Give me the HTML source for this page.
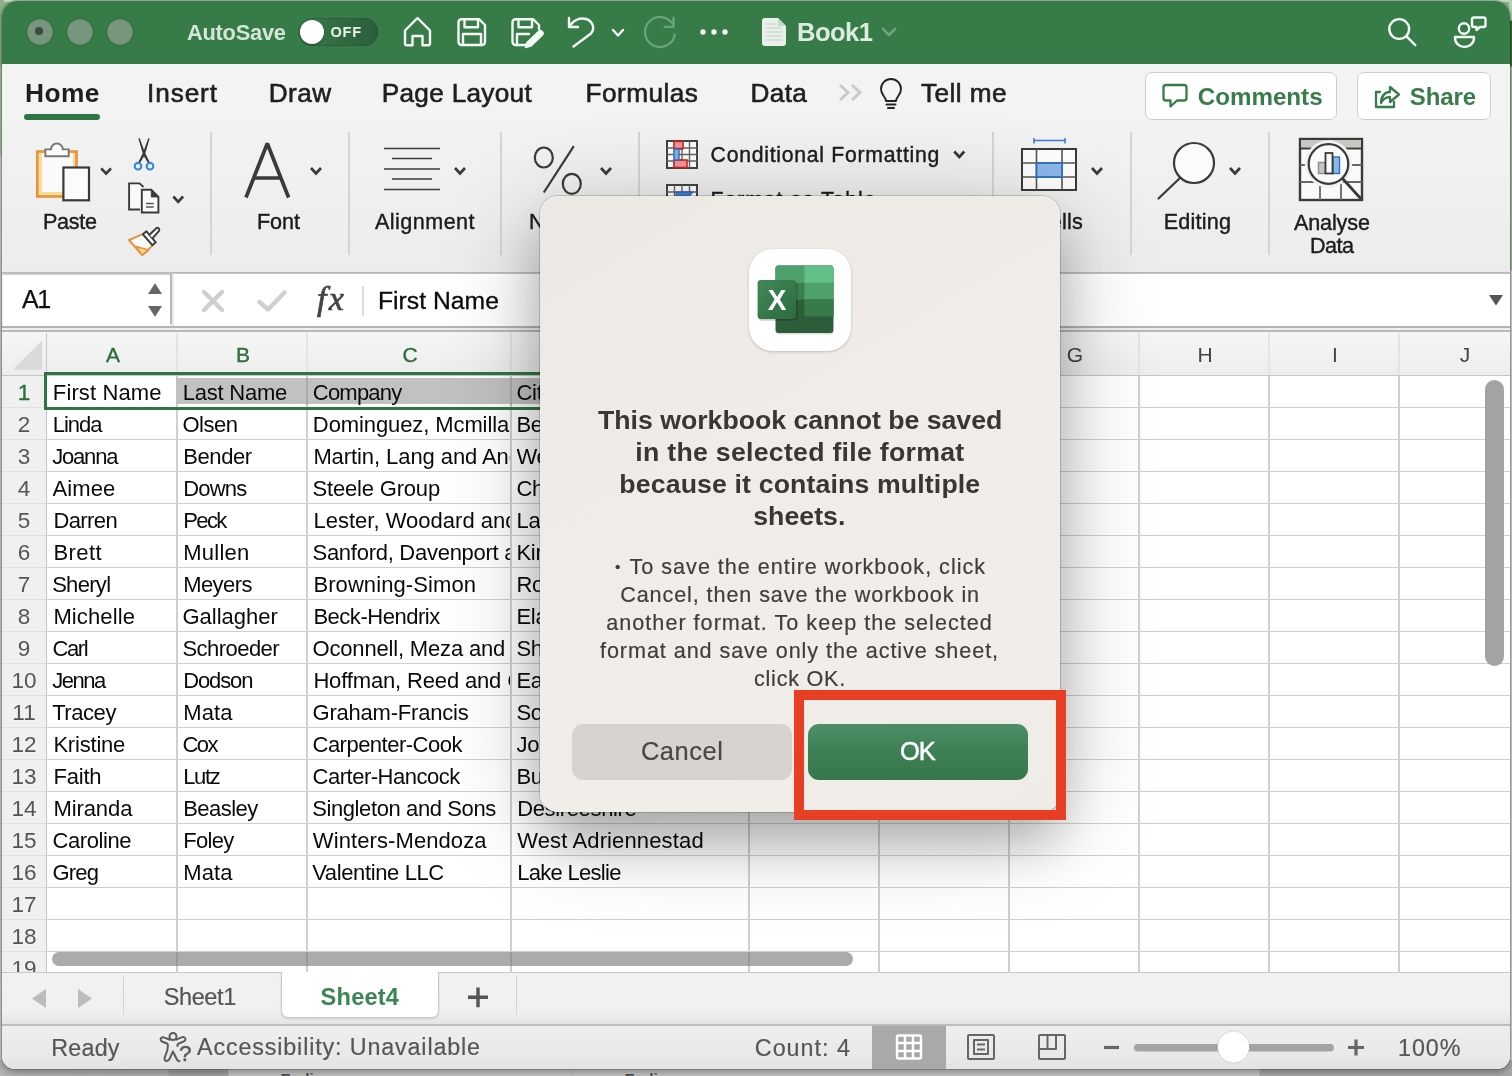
<!DOCTYPE html>
<html lang="en">
<head>
<meta charset="utf-8">
<title>Book1 - Excel</title>
<style>
*{box-sizing:border-box;margin:0;padding:0}
html,body{width:1512px;height:1076px;overflow:hidden}
body{position:relative;font-family:"Liberation Sans",sans-serif;background:#8fb58a;color:#222}
.abs,.t{position:absolute}
#win,#dlg,#deskwrap{will-change:transform}
.t{white-space:nowrap;line-height:1}
#desk-top{left:0;top:0;width:1512px;height:2px;background:#c4dbc5}
#desk-right{left:1509px;top:0;width:3px;height:1076px;background:linear-gradient(#b9d2b8 0,#b9d2b8 20px,#3d6a33 21px,#3d6a33 66px,#9cc098 67px,#9cc098 270px,#d6d6d6 271px)}
#desk-left{left:0;top:0;width:4px;height:1076px;background:linear-gradient(#8fb58a 0,#8fb58a 66px,#a3c39f 67px,#a3c39f 155px,#cdcdcd 156px)}
#desk-bottom{left:0;top:1060px;width:1512px;height:16px;background:linear-gradient(90deg,#b4b4b4 0,#b0b0b0 168px,#a2a2a2 169px,#a2a2a2 228px,#c6c6c6 229px,#c6c6c6 571px,#bdbdbd 572px,#c7c7c7 574px,#c7c7c7 1259px,#a9a9a9 1260px)}
#win{left:2px;top:1px;width:1508px;height:1068px;border-radius:15px 15px 13px 13px;overflow:hidden;background:#f1f1f1;box-shadow:0 0 0 1px rgba(0,0,0,.18),0 3px 8px rgba(0,0,0,.35)}
#pg{left:-2px;top:-1px;width:1512px;height:1076px}
#titlebar{left:0;top:0;width:1512px;height:64px;background:#377b49}
.tl{width:28px;height:28px;border-radius:50%;background:#76957c;border:1.800px solid #2b6539;top:18px}
#tabrow{left:0;top:64px;width:1512px;height:62px;background:#f3f3f3}
#ribbon{left:0;top:126px;width:1512px;height:147px;background:linear-gradient(#f2f2f2,#ececec)}
.tab{font-size:26px;color:#222;top:79px;letter-spacing:.35px}
.rl{font-size:21.5px;color:#1d1d1d;letter-spacing:.2px}
.sep{width:2px;background:#d4d4d4;top:132px;height:123px}
.btn{top:72px;height:48px;background:#fff;border:1.5px solid #cecece;border-radius:7px}
.btn .t{font-weight:bold;color:#387c4a;font-size:24px;top:11px}

.cal{font-family:"Liberation Sans",sans-serif}
.hd{top:344px;width:42px;text-align:center;font-size:21px}
.rn{left:4px;width:40px;text-align:center;font-size:22.500px}
.ce{font-size:22px;color:#0a0a0a;overflow:hidden;height:26px}
.gl{background:#cfcfcf}
.st{top:1036px;font-size:23.500px;color:#595959;letter-spacing:.55px}
#dlg{left:540px;top:196px;width:520px;height:615.500px;border-radius:18px;background:linear-gradient(150deg,#ece9e5 0,#f0ede9 45%,#f1eeea 70%,#efece8 100%);box-shadow:0 0 0 1px rgba(0,0,0,.17),0 20px 100px rgba(0,0,0,.23),0 30px 50px rgba(0,0,0,.21)}
.dt{left:0;width:520px;text-align:center;font-weight:bold;font-size:26.800px;line-height:32px;color:#3a3733}
.db{left:0;width:520px;text-align:center;font-size:21.300px;line-height:28px;color:#484542;letter-spacing:.65px}
.bt{top:528px;width:220px;height:56px;border-radius:11px;text-align:center;font-size:25.500px;line-height:55px}
</style>
</head>
<body>
<div class="abs" id="desk-top"></div>
<div class="abs" id="desk-right"></div>
<div class="abs" id="desk-left"></div>
<div class="abs" id="desk-bottom"></div>
<div class="t" style="left:280.500px;top:1070.500px;font-size:15.400px;font-weight:bold;color:#555">Earlier</div>
<div class="t" style="left:624.500px;top:1070.500px;font-size:15.400px;font-weight:bold;color:#555">Earlier</div>
<div class="abs" id="win"><div class="abs" id="pg">
<!-- title bar -->
<div class="abs" id="titlebar"></div>
<div class="abs tl" style="left:26px"><div class="abs" style="left:8.400px;top:8.400px;width:7.600px;height:7.600px;border-radius:50%;background:#394a40"></div></div>
<div class="abs tl" style="left:66px"></div>
<div class="abs tl" style="left:106px"></div>
<div class="abs" style="left:298px;top:18px;width:80px;height:28px;border-radius:14px;background:linear-gradient(90deg,#3a7a4b,#2a5e39);box-shadow:inset 0 0 0 1px rgba(0,0,0,.12)"></div>
<div class="abs" style="left:300px;top:20px;width:24px;height:24px;border-radius:50%;background:#fff;box-shadow:0 1px 2px rgba(0,0,0,.4)"></div>

<!-- tab row -->
<div class="abs" id="tabrow"></div>
<div class="abs" style="left:24px;top:114px;width:76px;height:5.5px;border-radius:3px;background:#2f7544"></div>
<div class="abs btn" style="left:1145px;width:192px"></div>
<div class="abs btn" style="left:1357px;width:134px"></div>

<!-- ribbon -->
<div class="abs" id="ribbon"></div>
<div class="abs sep" style="left:210px"></div>
<div class="abs sep" style="left:348px"></div>
<div class="abs sep" style="left:500px"></div>
<div class="abs sep" style="left:638px"></div>
<div class="abs sep" style="left:992px"></div>
<div class="abs sep" style="left:1130px"></div>
<div class="abs sep" style="left:1268px"></div>
<div class="t" style="left:187.00px;top:21.55px;font-size:21.8px;color:#d3e6d7;letter-spacing:-0.23px;font-weight:bold;">AutoSave</div>
<div class="t" style="left:330.50px;top:25.23px;font-size:14.5px;color:#eaf3ec;letter-spacing:0.75px;font-weight:bold;">OFF</div>
<div class="t" style="left:797.00px;top:20.33px;font-size:25.6px;color:#dcecdf;letter-spacing:-0.55px;font-weight:bold;">Book1</div>
<div class="t" style="left:25.00px;top:79.74px;font-size:26.3px;color:#1f1f1f;letter-spacing:0.46px;font-weight:bold;">Home</div>
<div class="t" style="left:147.00px;top:79.82px;font-size:26.2px;color:#1f1f1f;letter-spacing:0.90px;-webkit-text-stroke:.6px #1f1f1f;">Insert</div>
<div class="t" style="left:268.75px;top:79.82px;font-size:26.2px;color:#1f1f1f;letter-spacing:0.44px;-webkit-text-stroke:.6px #1f1f1f;">Draw</div>
<div class="t" style="left:381.75px;top:79.82px;font-size:26.2px;color:#1f1f1f;letter-spacing:0.29px;-webkit-text-stroke:.6px #1f1f1f;">Page Layout</div>
<div class="t" style="left:585.50px;top:79.82px;font-size:26.2px;color:#1f1f1f;letter-spacing:0.46px;-webkit-text-stroke:.6px #1f1f1f;">Formulas</div>
<div class="t" style="left:750.50px;top:79.82px;font-size:26.2px;color:#1f1f1f;letter-spacing:0.36px;-webkit-text-stroke:.6px #1f1f1f;">Data</div>
<div class="t" style="left:921.00px;top:79.82px;font-size:26.2px;color:#1f1f1f;letter-spacing:0.45px;-webkit-text-stroke:.6px #1f1f1f;">Tell me</div>
<div class="t" style="left:1197.75px;top:84.51px;font-size:24.2px;color:#387c4a;letter-spacing:-0.02px;font-weight:bold;">Comments</div>
<div class="t" style="left:1409.75px;top:84.68px;font-size:24px;color:#387c4a;letter-spacing:-0.12px;font-weight:bold;">Share</div>
<div class="t" style="left:43.00px;top:211.22px;font-size:21.6px;color:#1c1c1c;letter-spacing:-0.30px;-webkit-text-stroke:.4px #1c1c1c;">Paste</div>
<div class="t" style="left:257.00px;top:211.22px;font-size:21.6px;color:#1c1c1c;letter-spacing:-0.07px;-webkit-text-stroke:.4px #1c1c1c;">Font</div>
<div class="t" style="left:375.00px;top:211.22px;font-size:21.6px;color:#1c1c1c;letter-spacing:0.44px;-webkit-text-stroke:.4px #1c1c1c;">Alignment</div>
<div class="t" style="left:529.00px;top:211.22px;font-size:21.6px;color:#1c1c1c;-webkit-text-stroke:.4px #1c1c1c;letter-spacing:.5px;">Number</div>
<div class="t" style="left:710.60px;top:144.35px;font-size:21.2px;color:#1c1c1c;letter-spacing:0.74px;-webkit-text-stroke:.4px #1c1c1c;">Conditional Formatting</div>
<div class="t" style="left:710.60px;top:188.85px;font-size:21.2px;color:#1c1c1c;-webkit-text-stroke:.4px #1c1c1c;letter-spacing:.95px;">Format as Table</div>
<div class="t" style="left:1034.00px;top:211.22px;font-size:21.6px;color:#1c1c1c;letter-spacing:0.23px;-webkit-text-stroke:.4px #1c1c1c;">Cells</div>
<div class="t" style="left:1163.75px;top:211.22px;font-size:21.6px;color:#1c1c1c;letter-spacing:0.19px;-webkit-text-stroke:.4px #1c1c1c;">Editing</div>
<div class="t" style="left:1294.00px;top:211.72px;font-size:21.6px;color:#1c1c1c;letter-spacing:-0.15px;-webkit-text-stroke:.4px #1c1c1c;">Analyse</div>
<div class="t" style="left:1310.00px;top:234.72px;font-size:21.6px;color:#1c1c1c;letter-spacing:-0.56px;-webkit-text-stroke:.4px #1c1c1c;">Data</div>
<svg class="abs" style="left:0;top:0" width="1512" height="274" viewBox="0 0 1512 274" fill="none" stroke-linecap="round" stroke-linejoin="round">
<!-- titlebar icons -->
<g stroke="#f4f9f5" stroke-width="2.4">
<path d="M405 30.5 L417.5 18 L430 30.5 V43.5 a1.8 1.8 0 0 1 -1.8 1.8 H422.5 V36 H412.5 V45.3 H406.8 a1.8 1.8 0 0 1 -1.8 -1.8 Z"/>
<path d="M461.5 19.2 H479 L485 25 V42 a3 3 0 0 1 -3 3 H461.5 a3 3 0 0 1 -3 -3 V22.2 a3 3 0 0 1 3 -3 Z"/>
<path d="M464.5 19.5 V27.3 H478 V19.5"/>
<path d="M463 45 V34 H481 V45"/>
<path d="M529 45 H515.5 a3 3 0 0 1 -3 -3 V22.2 a3 3 0 0 1 3 -3 H533 L539 25 V29"/>
<path d="M518.5 19.5 V27.3 H532 V19.5"/>
<path d="M517 45 V34 H529"/>
<path d="M569 18 V27 H578"/>
<path d="M569.5 26.5 C573 20 580 17.5 586 19 C592.5 21 595.5 28 591 33.5 L573.5 46.5"/>
<path d="M613 30 L618 35.5 L623 30"/>
<path d="M1409.100 29 a9.900 9.900 0 1 1 -19.800 0 a9.900 9.900 0 1 1 19.800 0 Z M1406.300 36.200 L1415.300 45.200"/>
<circle cx="1464" cy="28.5" r="5.2"/>
<path d="M1455 37 H1474 V38 a9.5 9 0 0 1 -19 0 Z"/>
<path d="M1474 17.5 H1483.5 a2 2 0 0 1 2 2 V25 a2 2 0 0 1 -2 2 H1480 L1476.5 30 V27 H1474 a2 2 0 0 1 -2 -2 V19.5 a2 2 0 0 1 2 -2 Z"/>
</g>
<path d="M538.5 31.5 a2.6 2.6 0 0 1 3.7 3.7 L531 46 L525.5 47.5 L527 42.5 Z" fill="#f4f9f5" stroke="#f4f9f5" stroke-width="1.6"/>
<g stroke="#6ea47c" stroke-width="2.2">
<path d="M673.500 17.500 V26.800 H664.500"/>
<path d="M672.300 23.400 A15 15 0 1 0 674.800 34.600"/>
<path d="M883 29 L889 35 L895 29" stroke-width="2.6"/>
</g>
<g fill="#f4f9f5"><circle cx="703" cy="32" r="2.700"/><circle cx="714" cy="32" r="2.700"/><circle cx="725" cy="32" r="2.700"/></g>
<path d="M765 18 H778 L786 26 V43 a3 3 0 0 1 -3 3 H765 a3 3 0 0 1 -3 -3 V21 a3 3 0 0 1 3 -3 Z" fill="#e9f0ea"/>
<path d="M778 18 V26 H786 Z" fill="#c4d6c8"/>
<g stroke="#c2cfc5" stroke-width="1.2"><path d="M766 24h9M766 28h16M766 32h16M766 36h16M766 40h16"/></g>

<!-- tab row icons -->
<g stroke="#c9c9c9" stroke-width="3" stroke-linecap="butt" stroke-linejoin="miter"><path d="M840 85 L848 92.5 L840 100"/><path d="M852 85 L860 92.5 L852 100"/></g>
<g stroke="#222" stroke-width="1.9">
<path d="M886 101 C886 97 881 95 881 89 a10 10 0 0 1 20 0 C901 95 896 97 896 101 Z"/>
<path d="M886.5 104.5 H895.5 M888 108 H894"/>
</g>
<g stroke="#387c4a" stroke-width="2.3">
<path d="M1166 85 H1184 a2.5 2.5 0 0 1 2.5 2.5 V98 a2.5 2.5 0 0 1 -2.5 2.5 H1177 L1170.5 106.5 V100.5 H1166 a2.5 2.5 0 0 1 -2.5 -2.5 V87.500 a2.5 2.5 0 0 1 2.500 -2.500 Z"/>
<path d="M1380 92 H1376 V107 H1394 V102"/>
<path d="M1381 103 C1381 96 1385 92 1390 92 V87 L1399 94.500 L1390 102 V97 C1386 97 1383 99 1381 103 Z"/>
</g>

<!-- Paste -->
<rect x="37.300" y="151.500" width="39.200" height="45" fill="#f8dc9a" stroke="#e8923a" stroke-width="2.600" stroke-linejoin="miter"/>
<rect x="42" y="153" width="30.800" height="39" fill="#fafafa" stroke="none"/>
<path d="M45.300 156.300 V149.400 H51 a5.900 5.900 0 0 1 11.800 0 H68.700 V156.300 Z" fill="#fafafa" stroke="#777" stroke-width="1.900" stroke-linejoin="miter"/>
<rect x="63.400" y="167.500" width="25.600" height="32.800" fill="#fbfbfb" stroke="#3a3a3a" stroke-width="2.200" stroke-linejoin="miter"/>
<g stroke="#3a3a3a" stroke-width="2.700" stroke-linecap="butt" stroke-linejoin="miter">
<path d="M101.200 168.300 L106.100 173.600 L111 168.300"/>
<path d="M173.300 196.500 L178.200 201.800 L183.100 196.500"/>
<path d="M311 168 L316 173.500 L321 168"/>
<path d="M455 168 L460 173.500 L465 168"/>
<path d="M601 168 L606 173.500 L611 168"/>
<path d="M954.300 151.500 L959.300 157 L964.300 151.500"/>
<path d="M1092 168 L1097 173.500 L1102 168"/>
<path d="M1230 168 L1235 173.500 L1240 168"/>
</g>
<!-- scissors -->
<path d="M138.300 138.300 L139.700 138.300 L145.200 153 L149.600 162 L148 163 L143.200 155 Z" fill="#3a3a3a"/>
<path d="M149.700 138.300 L148.300 138.300 L142.800 153 L138.400 162 L140 163 L144.800 155 Z" fill="#3a3a3a"/>
<circle cx="138" cy="166.200" r="3.300" stroke="#3c86d6" stroke-width="2.100"/><circle cx="150" cy="166.200" r="3.300" stroke="#3c86d6" stroke-width="2.100"/>
<!-- copy -->
<path d="M140 209.500 H129.100 V183.400 H139.500 L143.500 187" stroke="#3a3a3a" stroke-width="1.900" stroke-linejoin="miter" stroke-linecap="butt" fill="#fafafa"/>
<path d="M141.800 189.800 H151.300 L158.400 196.900 V212.500 H141.800 Z" fill="#fafafa" stroke="#3a3a3a" stroke-width="1.900" stroke-linejoin="miter"/>
<path d="M151.300 189.800 V196.900 H158.400 Z" fill="#3a3a3a" stroke="#3a3a3a" stroke-width="1" stroke-linejoin="miter"/>
<path d="M146 203.400 H153.700 M146 207 H153.700" stroke="#555" stroke-width="1.500" stroke-linecap="butt"/>
<!-- format painter -->
<path d="M129 240 C134 238 139 236 142.800 234.200 L152.300 245.200 C150 248.500 146.500 252 142.200 255 Z" fill="#fafafa" stroke="#e8923a" stroke-width="2" stroke-linejoin="round"/>
<path d="M136 246.500 L148.500 250 L142.200 255 Z" fill="#f8dc9a" stroke="#e8923a" stroke-width="1.600" stroke-linejoin="round"/>
<path d="M142.800 234.200 L146.500 231.300 L155.800 242.300 L152.300 245.200 Z" fill="#fafafa" stroke="#3a3a3a" stroke-width="1.900" stroke-linejoin="round"/>
<path d="M149.500 234.800 L156.300 228.300 a1.900 1.900 0 0 1 2.700 2.600 L152.500 238.300" fill="#fafafa" stroke="#3a3a3a" stroke-width="1.900" stroke-linejoin="round"/>
<!-- Font A -->
<path d="M246 197.500 L267.300 143.500 L288.600 197.500 M253.500 178 H281" stroke="#3a3a3a" stroke-width="3.700" stroke-linecap="butt" stroke-linejoin="bevel"/>
<!-- Alignment -->
<g stroke="#3a3a3a" stroke-width="1.700" stroke-linecap="butt"><path d="M384 148.500 H440 M392 158.500 H432 M384 169 H440 M392 179 H432 M384 189.500 H440"/></g>
<!-- percent -->
<g stroke="#3a3a3a" stroke-width="2.200" stroke-linecap="butt"><ellipse cx="543.800" cy="157.500" rx="9" ry="10"/><ellipse cx="571.800" cy="183.800" rx="9" ry="10"/><path d="M573.800 146.200 L543.800 192.500"/></g>
<!-- conditional formatting -->
<g stroke-linecap="butt" stroke-linejoin="miter">
<rect x="667" y="141" width="30" height="27" fill="#fff" stroke="#444" stroke-width="2"/>
<path d="M674.500 141 V168 M682 141 V168 M689.500 141 V168 M667 148 H697 M667 154.500 H697 M667 161 H697" stroke="#666" stroke-width="1.400"/>
<rect x="674" y="141.500" width="9" height="7" fill="#f1959b" stroke="#c8281e" stroke-width="1.600"/>
<rect x="674" y="160" width="13" height="7.500" fill="#f1959b" stroke="#c8281e" stroke-width="1.600"/>
<rect x="674" y="149" width="5" height="11" fill="#7fb2ea" stroke="#2e6fc0" stroke-width="1.400"/>
<path d="M679.500 149 H683 M679.500 160 H683" stroke="#c8281e" stroke-width="1.600"/>
<rect x="667" y="185" width="30" height="27" fill="#fff" stroke="#444" stroke-width="2"/>
<path d="M674.500 185 V212 M682 185 V212 M689.500 185 V212 M667 192 H697" stroke="#666" stroke-width="1.400"/>
<path d="M676 192 H693 L689 197 H676 Z" fill="#3d7fd8" stroke="#2a5fb0" stroke-width="1"/>
</g>
<!-- cells -->
<g stroke-linecap="butt" stroke-linejoin="miter">
<rect x="1022" y="149" width="54" height="41" fill="#fdfdfd" stroke="#3a3a3a" stroke-width="2"/>
<path d="M1036.500 149 V190 M1062 149 V190 M1022 163 H1076 M1022 177 H1076" stroke="#555" stroke-width="1.600"/>
<rect x="1036.500" y="163" width="25.500" height="14" fill="#8ab8ea" stroke="#2e6fc0" stroke-width="1.800"/>
<path d="M1034 140.500 H1065 M1034 138 V143.500 M1065 138 V143.500" stroke="#3c80d0" stroke-width="1.600"/>
</g>
<!-- editing -->
<circle cx="1194" cy="163" r="20" fill="#fbfbfb" stroke="#3a3a3a" stroke-width="2.200"/>
<path d="M1180 178 L1158.500 198.500" stroke="#3a3a3a" stroke-width="2.200"/>
<!-- analyse data -->
<g stroke-linecap="butt" stroke-linejoin="miter">
<rect x="1300" y="139" width="62" height="61" fill="#fafafa" stroke="#3a3a3a" stroke-width="2.400"/>
<rect x="1301" y="140" width="60" height="7.500" fill="#c8c6c3" stroke="none"/>
<path d="M1300 148.500 H1362" stroke="#3a3a3a" stroke-width="2"/>
<path d="M1300 165 H1362 M1300 182 H1362 M1320 182 V200 M1341 182 V200" stroke="#666" stroke-width="1.800"/>
<circle cx="1328.500" cy="164" r="21.500" fill="#fafafa" stroke="#f1f1f1" stroke-width="4.500"/>
<circle cx="1328.500" cy="164" r="19.800" fill="#fafafa" stroke="#3a3a3a" stroke-width="2.300"/>
<rect x="1318.500" y="162.500" width="7" height="11" fill="#c8c6c3" stroke="#8a8a8a" stroke-width="1.400"/>
<rect x="1333" y="157" width="6.500" height="16.500" fill="#8ab8ea" stroke="#2e6fc0" stroke-width="1.400"/>
<rect x="1325.500" y="153" width="7" height="20.500" fill="#fafafa" stroke="#3a3a3a" stroke-width="1.800"/>
<path d="M1342.500 178.500 L1362 200" stroke="#3a3a3a" stroke-width="2.800"/>
</g>
</svg>
<!-- formula bar -->
<div class="abs" style="left:0;top:272px;width:1512px;height:60px;background:#ececec"></div>
<div class="abs" style="left:0;top:272px;width:1512px;height:2.300px;background:linear-gradient(#b4b4b4,#c9c9c9)"></div>
<div class="abs" style="left:3px;top:274.300px;width:167px;height:51.700px;background:#fff;border-top:1.700px solid #cdcdcd"></div>
<div class="abs" style="left:170px;top:274.300px;width:2.200px;height:49.500px;background:#b9b9b9"></div>
<div class="abs" style="left:172.200px;top:274.300px;width:1.800px;height:51.700px;background:#e9e9e9"></div>
<div class="abs" style="left:174px;top:274.300px;width:1338px;height:51.700px;background:#fff"></div>
<div class="abs" style="left:0;top:326px;width:1512px;height:2px;background:#b3b3b3"></div>
<div class="abs" style="left:0;top:328px;width:1512px;height:2.300px;background:#efefef"></div>
<div class="abs" style="left:0;top:330.300px;width:1512px;height:1.500px;background:#b9b9b9"></div>
<div class="t" style="left:22.00px;top:286.84px;font-size:25px;color:#111;letter-spacing:-1.38px;-webkit-text-stroke:.25px #111;">A1</div>
<div class="t" style="left:378.00px;top:289.09px;font-size:24.7px;color:#0a0a0a;letter-spacing:0.02px;-webkit-text-stroke:.3px #0a0a0a;">First Name</div>
<div class="t" style="left:317px;top:282px;font-family:'Liberation Serif',serif;font-style:italic;font-size:34px;color:#444;letter-spacing:2.200px;-webkit-text-stroke:.7px #444">fx</div>
<div class="abs" style="left:362px;top:286px;width:1.500px;height:30px;background:#dcdcdc"></div>
<svg class="abs" style="left:0;top:272px" width="1512" height="60" viewBox="0 272 1512 60" fill="none"><path d="M148 294 L155 283.300 L162 294 Z M148 306 L155 316.800 L162 306 Z" fill="#666"/><path d="M204 292 L222 310 M222 292 L204 310" stroke="#cfcfcf" stroke-width="4.400" stroke-linecap="round"/><path d="M259.500 302 L268 309.500 L284.500 292.500" stroke="#cfcfcf" stroke-width="4.400" stroke-linecap="round" stroke-linejoin="round"/><path d="M1489 295 H1503 L1496 305.500 Z" fill="#555"/></svg>
<!-- grid -->
<div class="abs" style="left:0;top:332px;width:1512px;height:43px;background:linear-gradient(#f6f6f6,#ededed)"></div>
<div class="abs" style="left:0;top:375px;width:47px;height:597px;background:#f0f0f0"></div>
<div class="abs" style="left:47px;top:376px;width:1465px;height:596px;background:#fff"></div>
<svg class="abs" style="left:10px;top:338px" width="34" height="34" viewBox="0 0 34 34"><path d="M32 2.500 V31.700 H2.500 Z" fill="#dadada"/></svg>
<div class="t cal hd" style="left:92px;color:#2d6c3d;-webkit-text-stroke:.35px #2d6c3d;">A</div>
<div class="t cal hd" style="left:222px;color:#2d6c3d;-webkit-text-stroke:.35px #2d6c3d;">B</div>
<div class="t cal hd" style="left:389px;color:#2d6c3d;-webkit-text-stroke:.35px #2d6c3d;">C</div>
<div class="t cal hd" style="left:610px;color:#2d6c3d;-webkit-text-stroke:.35px #2d6c3d;">D</div>
<div class="t cal hd" style="left:794px;color:#444;">E</div>
<div class="t cal hd" style="left:924px;color:#444;">F</div>
<div class="t cal hd" style="left:1054px;color:#444;">G</div>
<div class="t cal hd" style="left:1184px;color:#444;">H</div>
<div class="t cal hd" style="left:1314px;color:#444;">I</div>
<div class="t cal hd" style="left:1444px;color:#444;">J</div>
<div class="abs" style="left:176px;top:333px;width:1.5px;height:41px;background:#e4e4e4"></div>
<div class="abs" style="left:306px;top:333px;width:1.5px;height:41px;background:#e4e4e4"></div>
<div class="abs" style="left:510px;top:333px;width:1.5px;height:41px;background:#e4e4e4"></div>
<div class="abs" style="left:748px;top:333px;width:1.5px;height:41px;background:#e4e4e4"></div>
<div class="abs" style="left:878px;top:333px;width:1.5px;height:41px;background:#e4e4e4"></div>
<div class="abs" style="left:1008px;top:333px;width:1.5px;height:41px;background:#e4e4e4"></div>
<div class="abs" style="left:1138px;top:333px;width:1.5px;height:41px;background:#e4e4e4"></div>
<div class="abs" style="left:1268px;top:333px;width:1.5px;height:41px;background:#e4e4e4"></div>
<div class="abs" style="left:1398px;top:333px;width:1.5px;height:41px;background:#e4e4e4"></div>
<div class="abs" style="left:45.800px;top:333px;width:1.600px;height:639px;background:#c6c6c6"></div>
<div class="abs" style="left:0;top:374.5px;width:1512px;height:1.5px;background:#c6c6c6"></div>
<div class="abs gl" style="left:47px;top:406.5px;width:1465px;height:1.600px"></div>
<div class="abs" style="left:0;top:406.5px;width:46px;height:1.500px;background:#e1e1e1"></div>
<div class="abs gl" style="left:47px;top:438.5px;width:1465px;height:1.600px"></div>
<div class="abs" style="left:0;top:438.5px;width:46px;height:1.500px;background:#e1e1e1"></div>
<div class="abs gl" style="left:47px;top:470.5px;width:1465px;height:1.600px"></div>
<div class="abs" style="left:0;top:470.5px;width:46px;height:1.500px;background:#e1e1e1"></div>
<div class="abs gl" style="left:47px;top:502.5px;width:1465px;height:1.600px"></div>
<div class="abs" style="left:0;top:502.5px;width:46px;height:1.500px;background:#e1e1e1"></div>
<div class="abs gl" style="left:47px;top:534.5px;width:1465px;height:1.600px"></div>
<div class="abs" style="left:0;top:534.5px;width:46px;height:1.500px;background:#e1e1e1"></div>
<div class="abs gl" style="left:47px;top:566.5px;width:1465px;height:1.600px"></div>
<div class="abs" style="left:0;top:566.5px;width:46px;height:1.500px;background:#e1e1e1"></div>
<div class="abs gl" style="left:47px;top:598.5px;width:1465px;height:1.600px"></div>
<div class="abs" style="left:0;top:598.5px;width:46px;height:1.500px;background:#e1e1e1"></div>
<div class="abs gl" style="left:47px;top:630.5px;width:1465px;height:1.600px"></div>
<div class="abs" style="left:0;top:630.5px;width:46px;height:1.500px;background:#e1e1e1"></div>
<div class="abs gl" style="left:47px;top:662.5px;width:1465px;height:1.600px"></div>
<div class="abs" style="left:0;top:662.5px;width:46px;height:1.500px;background:#e1e1e1"></div>
<div class="abs gl" style="left:47px;top:694.5px;width:1465px;height:1.600px"></div>
<div class="abs" style="left:0;top:694.5px;width:46px;height:1.500px;background:#e1e1e1"></div>
<div class="abs gl" style="left:47px;top:726.5px;width:1465px;height:1.600px"></div>
<div class="abs" style="left:0;top:726.5px;width:46px;height:1.500px;background:#e1e1e1"></div>
<div class="abs gl" style="left:47px;top:758.5px;width:1465px;height:1.600px"></div>
<div class="abs" style="left:0;top:758.5px;width:46px;height:1.500px;background:#e1e1e1"></div>
<div class="abs gl" style="left:47px;top:790.5px;width:1465px;height:1.600px"></div>
<div class="abs" style="left:0;top:790.5px;width:46px;height:1.500px;background:#e1e1e1"></div>
<div class="abs gl" style="left:47px;top:822.5px;width:1465px;height:1.600px"></div>
<div class="abs" style="left:0;top:822.5px;width:46px;height:1.500px;background:#e1e1e1"></div>
<div class="abs gl" style="left:47px;top:854.5px;width:1465px;height:1.600px"></div>
<div class="abs" style="left:0;top:854.5px;width:46px;height:1.500px;background:#e1e1e1"></div>
<div class="abs gl" style="left:47px;top:886.5px;width:1465px;height:1.600px"></div>
<div class="abs" style="left:0;top:886.5px;width:46px;height:1.500px;background:#e1e1e1"></div>
<div class="abs gl" style="left:47px;top:918.5px;width:1465px;height:1.600px"></div>
<div class="abs" style="left:0;top:918.5px;width:46px;height:1.500px;background:#e1e1e1"></div>
<div class="abs gl" style="left:47px;top:950.5px;width:1465px;height:1.600px"></div>
<div class="abs" style="left:0;top:950.5px;width:46px;height:1.500px;background:#e1e1e1"></div>
<div class="abs gl" style="left:176.1px;top:376px;width:1.600px;height:596px"></div>
<div class="abs gl" style="left:306.1px;top:376px;width:1.600px;height:596px"></div>
<div class="abs gl" style="left:510.1px;top:376px;width:1.600px;height:596px"></div>
<div class="abs gl" style="left:748.1px;top:376px;width:1.600px;height:596px"></div>
<div class="abs gl" style="left:878.1px;top:376px;width:1.600px;height:596px"></div>
<div class="abs gl" style="left:1008.1px;top:376px;width:1.600px;height:596px"></div>
<div class="abs gl" style="left:1138.1px;top:376px;width:1.600px;height:596px"></div>
<div class="abs gl" style="left:1268.1px;top:376px;width:1.600px;height:596px"></div>
<div class="abs gl" style="left:1398.1px;top:376px;width:1.600px;height:596px"></div>
<div class="t cal rn" style="top:381.6px;color:#2d6c3d;-webkit-text-stroke:.35px #2d6c3d;">1</div>
<div class="t cal rn" style="top:413.6px;color:#555;">2</div>
<div class="t cal rn" style="top:445.6px;color:#555;">3</div>
<div class="t cal rn" style="top:477.6px;color:#555;">4</div>
<div class="t cal rn" style="top:509.6px;color:#555;">5</div>
<div class="t cal rn" style="top:541.6px;color:#555;">6</div>
<div class="t cal rn" style="top:573.6px;color:#555;">7</div>
<div class="t cal rn" style="top:605.6px;color:#555;">8</div>
<div class="t cal rn" style="top:637.6px;color:#555;">9</div>
<div class="t cal rn" style="top:669.6px;color:#555;">10</div>
<div class="t cal rn" style="top:701.6px;color:#555;">11</div>
<div class="t cal rn" style="top:733.6px;color:#555;">12</div>
<div class="t cal rn" style="top:765.6px;color:#555;">13</div>
<div class="t cal rn" style="top:797.6px;color:#555;">14</div>
<div class="t cal rn" style="top:829.6px;color:#555;">15</div>
<div class="t cal rn" style="top:861.6px;color:#555;">16</div>
<div class="t cal rn" style="top:893.6px;color:#555;">17</div>
<div class="t cal rn" style="top:925.6px;color:#555;">18</div>
<div class="t cal rn" style="top:957.6px;color:#555;">19</div>
<div class="abs" style="left:176px;top:378.300px;width:600px;height:25.400px;background:#c1c1c1"></div>
<div class="abs gl" style="left:306px;top:378px;width:1.5px;height:27px;background:#adadad"></div>
<div class="abs gl" style="left:510px;top:378px;width:1.5px;height:27px;background:#adadad"></div>
<div class="t cal ce" style="left:52.86px;top:382.20px;width:123.14px;letter-spacing:0.11px;">First Name</div>
<div class="t cal ce" style="left:182.86px;top:382.20px;width:123.14px;letter-spacing:-0.24px;">Last Name</div>
<div class="t cal ce" style="left:312.86px;top:382.20px;width:197.14px;letter-spacing:-0.81px;">Company</div>
<div class="t cal ce" style="left:516.5px;top:382.20px;width:200px;letter-spacing:-.3px">City</div>
<div class="t cal ce" style="left:52.86px;top:414.20px;width:123.14px;letter-spacing:-1.06px;">Linda</div>
<div class="t cal ce" style="left:182.50px;top:414.20px;width:123.50px;letter-spacing:-0.52px;">Olsen</div>
<div class="t cal ce" style="left:312.86px;top:414.20px;width:197.14px;letter-spacing:-0.10px;">Dominguez, Mcmillan and Sons</div>
<div class="t cal ce" style="left:516.5px;top:414.20px;width:200px;letter-spacing:-.3px">Bethshire</div>
<div class="t cal ce" style="left:52.14px;top:446.20px;width:123.86px;letter-spacing:-1.17px;">Joanna</div>
<div class="t cal ce" style="left:183.21px;top:446.20px;width:122.79px;letter-spacing:-0.40px;">Bender</div>
<div class="t cal ce" style="left:313.39px;top:446.20px;width:196.61px;letter-spacing:-0.08px;">Martin, Lang and Anderson</div>
<div class="t cal ce" style="left:516.5px;top:446.20px;width:200px;letter-spacing:-.3px">West Karen</div>
<div class="t cal ce" style="left:52.50px;top:478.20px;width:123.50px;letter-spacing:0.12px;">Aimee</div>
<div class="t cal ce" style="left:183.21px;top:478.20px;width:122.79px;letter-spacing:-0.82px;">Downs</div>
<div class="t cal ce" style="left:312.50px;top:478.20px;width:197.50px;letter-spacing:-0.18px;">Steele Group</div>
<div class="t cal ce" style="left:516.5px;top:478.20px;width:200px;letter-spacing:-.3px">Christinaview</div>
<div class="t cal ce" style="left:53.39px;top:510.20px;width:122.61px;letter-spacing:-0.58px;">Darren</div>
<div class="t cal ce" style="left:183.21px;top:510.20px;width:122.79px;letter-spacing:-1.60px;">Peck</div>
<div class="t cal ce" style="left:313.39px;top:510.20px;width:196.61px;letter-spacing:0.02px;">Lester, Woodard and Hill</div>
<div class="t cal ce" style="left:516.5px;top:510.20px;width:200px;letter-spacing:-.3px">Lake Mark</div>
<div class="t cal ce" style="left:53.39px;top:542.20px;width:122.61px;letter-spacing:0.45px;">Brett</div>
<div class="t cal ce" style="left:183.21px;top:542.20px;width:122.79px;letter-spacing:0.26px;">Mullen</div>
<div class="t cal ce" style="left:312.50px;top:542.20px;width:197.50px;letter-spacing:-0.27px;">Sanford, Davenport and Cole</div>
<div class="t cal ce" style="left:516.5px;top:542.20px;width:200px;letter-spacing:-.3px">Kimberlyton</div>
<div class="t cal ce" style="left:52.14px;top:574.20px;width:123.86px;letter-spacing:-0.69px;">Sheryl</div>
<div class="t cal ce" style="left:183.21px;top:574.20px;width:122.79px;letter-spacing:-0.57px;">Meyers</div>
<div class="t cal ce" style="left:313.39px;top:574.20px;width:196.61px;letter-spacing:0.09px;">Browning-Simon</div>
<div class="t cal ce" style="left:516.5px;top:574.20px;width:200px;letter-spacing:-.3px">Robertville</div>
<div class="t cal ce" style="left:53.39px;top:606.20px;width:122.61px;letter-spacing:0.12px;">Michelle</div>
<div class="t cal ce" style="left:182.50px;top:606.20px;width:123.50px;">Gallagher</div>
<div class="t cal ce" style="left:313.39px;top:606.20px;width:196.61px;letter-spacing:-0.47px;">Beck-Hendrix</div>
<div class="t cal ce" style="left:516.5px;top:606.20px;width:200px;letter-spacing:-.3px">Elaineberg</div>
<div class="t cal ce" style="left:52.50px;top:638.20px;width:123.50px;letter-spacing:-1.43px;">Carl</div>
<div class="t cal ce" style="left:182.50px;top:638.20px;width:123.50px;letter-spacing:-0.55px;">Schroeder</div>
<div class="t cal ce" style="left:312.50px;top:638.20px;width:197.50px;letter-spacing:-0.17px;">Oconnell, Meza and Hall</div>
<div class="t cal ce" style="left:516.5px;top:638.20px;width:200px;letter-spacing:-.3px">Shawnstad</div>
<div class="t cal ce" style="left:52.14px;top:670.20px;width:123.86px;letter-spacing:-1.44px;">Jenna</div>
<div class="t cal ce" style="left:183.21px;top:670.20px;width:122.79px;letter-spacing:-1.12px;">Dodson</div>
<div class="t cal ce" style="left:313.39px;top:670.20px;width:196.61px;letter-spacing:-0.15px;">Hoffman, Reed and Cruz</div>
<div class="t cal ce" style="left:516.5px;top:670.20px;width:200px;letter-spacing:-.3px">East Tina</div>
<div class="t cal ce" style="left:52.14px;top:702.20px;width:123.86px;letter-spacing:-0.43px;">Tracey</div>
<div class="t cal ce" style="left:183.21px;top:702.20px;width:122.79px;letter-spacing:0.11px;">Mata</div>
<div class="t cal ce" style="left:312.50px;top:702.20px;width:197.50px;letter-spacing:-0.21px;">Graham-Francis</div>
<div class="t cal ce" style="left:516.5px;top:702.20px;width:200px;letter-spacing:-.3px">South Amy</div>
<div class="t cal ce" style="left:53.39px;top:734.20px;width:122.61px;letter-spacing:-0.20px;">Kristine</div>
<div class="t cal ce" style="left:182.50px;top:734.20px;width:123.50px;letter-spacing:-1.60px;">Cox</div>
<div class="t cal ce" style="left:312.50px;top:734.20px;width:197.50px;letter-spacing:-0.51px;">Carpenter-Cook</div>
<div class="t cal ce" style="left:516.5px;top:734.20px;width:200px;letter-spacing:-.3px">Jodyville</div>
<div class="t cal ce" style="left:53.39px;top:766.20px;width:122.61px;letter-spacing:-0.18px;">Faith</div>
<div class="t cal ce" style="left:183.21px;top:766.20px;width:122.79px;letter-spacing:-1.36px;">Lutz</div>
<div class="t cal ce" style="left:312.50px;top:766.20px;width:197.50px;letter-spacing:-0.48px;">Carter-Hancock</div>
<div class="t cal ce" style="left:516.5px;top:766.20px;width:200px;letter-spacing:-.3px">Burkeland</div>
<div class="t cal ce" style="left:53.39px;top:798.20px;width:122.61px;letter-spacing:-0.07px;">Miranda</div>
<div class="t cal ce" style="left:183.21px;top:798.20px;width:122.79px;letter-spacing:-0.55px;">Beasley</div>
<div class="t cal ce" style="left:312.14px;top:798.20px;width:197.86px;letter-spacing:-0.39px;">Singleton and Sons</div>
<div class="t cal ce" style="left:517.14px;top:798.20px;width:230.86px;letter-spacing:-0.35px;">Desireeshire</div>
<div class="t cal ce" style="left:52.50px;top:830.20px;width:123.50px;letter-spacing:-0.43px;">Caroline</div>
<div class="t cal ce" style="left:183.21px;top:830.20px;width:122.79px;letter-spacing:-0.68px;">Foley</div>
<div class="t cal ce" style="left:312.86px;top:830.20px;width:197.14px;letter-spacing:0.09px;">Winters-Mendoza</div>
<div class="t cal ce" style="left:517.14px;top:830.20px;width:230.86px;letter-spacing:0.14px;">West Adriennestad</div>
<div class="t cal ce" style="left:52.50px;top:862.20px;width:123.50px;letter-spacing:-0.84px;">Greg</div>
<div class="t cal ce" style="left:183.21px;top:862.20px;width:122.79px;letter-spacing:0.11px;">Mata</div>
<div class="t cal ce" style="left:312.14px;top:862.20px;width:197.86px;letter-spacing:-0.37px;">Valentine LLC</div>
<div class="t cal ce" style="left:517.14px;top:862.20px;width:230.86px;letter-spacing:-0.70px;">Lake Leslie</div>
<div class="abs" style="left:44.200px;top:372.300px;width:720px;height:37.700px;border:3.800px solid #2f7544;border-right:none"></div>
<div class="abs" style="left:1485px;top:380px;width:19px;height:286px;border-radius:9.500px;background:#a3a3a3"></div>
<div class="abs" style="left:52px;top:952px;width:801px;height:13.500px;border-radius:7px;background:rgba(120,120,120,.62)"></div>
<!-- sheet tabs -->
<div class="abs" style="left:0;top:972px;width:1512px;height:53px;background:linear-gradient(#f1f1f1 0,#f0f0f0 75%,#e3e3e3 100%)"></div>
<div class="abs" style="left:0;top:971.500px;width:1512px;height:1.500px;background:#c9c9c9"></div>
<div class="abs" style="left:281px;top:966px;width:158px;height:52px;background:#fff;border:1.500px solid #c9c9c9;border-top:none;border-radius:0 0 7px 7px;box-shadow:0 1px 2px rgba(0,0,0,.12);clip-path:inset(6px -4px -4px -4px)"></div>
<div class="abs" style="left:122.500px;top:975px;width:1.500px;height:40px;background:#d6d6d6"></div>
<div class="abs" style="left:515.500px;top:975px;width:1.500px;height:40px;background:#d6d6d6"></div>
<svg class="abs" style="left:0;top:972px" width="600" height="52" viewBox="0 972 600 52" fill="none">
<path d="M46 989 V1008 L32 998.500 Z M78 989 V1008 L92 998.500 Z" fill="#bcbcbc"/>
<path d="M468 997.300 H488 M478 987.400 V1007.200" stroke="#555" stroke-width="3.400"/>
</svg>
<!-- status bar -->
<div class="abs" style="left:0;top:1025px;width:1512px;height:51px;background:linear-gradient(#eeeeee 0,#e9e9e9 30px,#e2e2e2 44px)"></div>
<div class="abs" style="left:0;top:1024px;width:1512px;height:1.500px;background:#bdbdbd"></div>
<div class="abs" style="left:872px;top:1025.500px;width:74px;height:45px;background:#a9a9a9"></div>
<div class="t" style="left:163.75px;top:986.41px;font-size:23.5px;color:#555;letter-spacing:-0.40px;-webkit-text-stroke:.2px #555;">Sheet1</div>
<div class="t" style="left:320.60px;top:986.42px;font-size:23.6px;color:#3a8652;letter-spacing:0.20px;font-weight:bold;">Sheet4</div>
<div class="t" style="left:51.25px;top:1036.58px;font-size:23.3px;color:#575757;letter-spacing:0.23px;-webkit-text-stroke:.2px #575757;">Ready</div>
<div class="t" style="left:197.00px;top:1036.38px;font-size:23.3px;color:#575757;letter-spacing:0.86px;-webkit-text-stroke:.2px #575757;">Accessibility: Unavailable</div>
<div class="t" style="left:754.80px;top:1036.88px;font-size:23.3px;color:#575757;letter-spacing:1.02px;-webkit-text-stroke:.2px #575757;">Count: 4</div>
<div class="t" style="left:1398.00px;top:1036.88px;font-size:23.3px;color:#575757;letter-spacing:0.95px;-webkit-text-stroke:.2px #575757;">100%</div>
<svg class="abs" style="left:0;top:1026px" width="1512" height="44" viewBox="0 1026 1512 44" fill="none" stroke-linecap="round" stroke-linejoin="round">
<g stroke="#5a5a5a" stroke-width="2">
<circle cx="173" cy="1036.500" r="3.500"/>
<path d="M169.800 1039.700 L164.500 1037.600 C162.500 1036.700 160.300 1037.600 160.600 1039.800 C160.800 1041 161.500 1041.300 162.500 1041.700 L167 1043.500 C167.800 1043.900 168 1044.500 167.900 1045.500 L167.400 1050 L164.600 1058 C164 1060 165.500 1061.300 167.200 1060.800 C168.500 1060.400 169.300 1059.500 169.800 1058.300 L172.900 1051.500 L176.800 1059.300 C177.300 1060.300 178.200 1061 179.400 1061.200"/>
<path d="M176.200 1039.700 L181.500 1037.400 C183.800 1036.400 186 1037.800 185.300 1040 C185 1041 184 1041.300 183 1041.700 L178.500 1043.600 C177.600 1044 177.300 1044.800 177.400 1046"/>
</g>
<text x="179" y="1061.200" font-family="Liberation Sans, sans-serif" font-size="22.500" fill="#5a5a5a" stroke="#5a5a5a" stroke-width=".5">?</text>
<g stroke="#fff" stroke-width="2.400" stroke-linecap="butt">
<rect x="897" y="1035.500" width="24" height="23" rx="1.500"/>
<path d="M905 1035.500 V1058.500 M913 1035.500 V1058.500 M897 1043 H921 M897 1051 H921"/>
</g>
<g stroke="#666" stroke-width="2" stroke-linecap="butt">
<rect x="968" y="1035" width="26" height="24" rx="1"/>
<rect x="974" y="1040" width="14" height="14"/>
<path d="M977 1044.500 H985 M977 1049.500 H985"/>
<rect x="1039" y="1035" width="26" height="24" rx="1"/>
<path d="M1039 1049 H1056 V1035 M1047.500 1035 V1049"/>
</g>
<path d="M1104 1047.500 H1119" stroke="#666" stroke-width="3.200" stroke-linecap="butt"/>
<path d="M1348 1047.500 H1364 M1356 1039.500 V1055.500" stroke="#666" stroke-width="3.200" stroke-linecap="butt"/>
<rect x="1134" y="1044" width="200" height="7.500" rx="3.700" fill="#a3a3a3"/>
<circle cx="1233.500" cy="1047" r="16" fill="#fff" stroke="rgba(0,0,0,.13)" stroke-width="1"/>
</svg>
</div></div><!-- /pg /win -->
<!-- dialog -->
<div class="abs" id="dlg"><div class="abs" style="left:-540px;top:-196px;width:0;height:0">
<div class="abs" style="left:748.700px;top:248.700px;width:102.800px;height:102.800px;border-radius:24px;background:#fff;box-shadow:0 1px 3px rgba(0,0,0,.2)"></div>
<svg class="abs" style="left:749px;top:249px" width="102" height="102" viewBox="749 249 102 102">
<defs><linearGradient id="xg" x1="0" y1="0" x2="1" y2="1"><stop offset="0" stop-color="#41895a"/><stop offset="1" stop-color="#2c6a3c"/></linearGradient></defs>
<rect x="776" y="267" width="57.500" height="67.500" rx="3" fill="rgba(0,0,0,.13)"/>
<rect x="775.500" y="265.400" width="57.900" height="67.700" rx="3" fill="#2d5d3b"/>
<path d="M778.500 265.400 H830.400 a3 3 0 0 1 3 3 V283.400 H775.500 V268.400 a3 3 0 0 1 3 -3 Z" fill="#4ea16d"/>
<path d="M804.400 265.400 H830.400 a3 3 0 0 1 3 3 V283.400 H804.400 Z" fill="#62bf88"/>
<rect x="775.500" y="282.900" width="57.900" height="17.200" fill="#3a7f4e"/>
<rect x="804.400" y="282.900" width="29" height="17.200" fill="#4ea16d"/>
<rect x="775.500" y="299.600" width="57.900" height="17.300" fill="#2d5d3b"/>
<rect x="804.400" y="299.600" width="29" height="16.800" fill="#387a4a"/>
<rect x="758.600" y="281.800" width="38.800" height="39" rx="3.500" fill="rgba(0,0,0,.2)"/>
<rect x="757.600" y="279.900" width="38.400" height="39" rx="3.200" fill="url(#xg)"/>
<text x="777" y="310.200" text-anchor="middle" font-family="Liberation Sans, sans-serif" font-weight="bold" font-size="29.900" fill="#fff" textLength="18.700" lengthAdjust="spacingAndGlyphs">X</text>
</svg>
<div class="t" style="left:598.00px;top:407.20px;font-size:26.7px;color:#3a3733;letter-spacing:-0.02px;font-weight:bold;">This workbook cannot be saved</div>
<div class="t" style="left:635.30px;top:439.20px;font-size:26.7px;color:#3a3733;letter-spacing:0.27px;font-weight:bold;">in the selected file format</div>
<div class="t" style="left:619.30px;top:471.20px;font-size:26.7px;color:#3a3733;letter-spacing:0.13px;font-weight:bold;">because it contains multiple</div>
<div class="t" style="left:753.20px;top:503.20px;font-size:26.7px;color:#3a3733;letter-spacing:0.04px;font-weight:bold;">sheets.</div>
<div class="t" style="left:615.00px;top:556.22px;font-size:21.6px;color:#403d3a;letter-spacing:0.99px;-webkit-text-stroke:.2px #403d3a;"><span style="font-size:.72em;position:relative;top:-.12em;margin-right:1.5px">•</span> To save the entire workbook, click</div>
<div class="t" style="left:620.20px;top:584.22px;font-size:21.6px;color:#403d3a;letter-spacing:0.90px;-webkit-text-stroke:.2px #403d3a;">Cancel, then save the workbook in</div>
<div class="t" style="left:606.30px;top:612.22px;font-size:21.6px;color:#403d3a;letter-spacing:1.01px;-webkit-text-stroke:.2px #403d3a;">another format. To keep the selected</div>
<div class="t" style="left:600.00px;top:640.22px;font-size:21.6px;color:#403d3a;letter-spacing:0.93px;-webkit-text-stroke:.2px #403d3a;">format and save only the active sheet,</div>
<div class="t" style="left:754.00px;top:668.22px;font-size:21.6px;color:#403d3a;letter-spacing:0.75px;-webkit-text-stroke:.2px #403d3a;">click OK.</div>
<div class="abs" style="left:572px;top:724px;width:220px;height:56px;border-radius:11px;background:#d7d4d0"></div>
<div class="abs" style="left:808px;top:724px;width:220px;height:56px;border-radius:11px;background:linear-gradient(#4c8e67,#3f8156 45%,#35774a)"></div>
<div class="t" style="left:640.90px;top:738.61px;font-size:25.5px;color:#4a4744;letter-spacing:0.53px;-webkit-text-stroke:.2px #4a4744;">Cancel</div>
<div class="t" style="left:900.00px;top:738.61px;font-size:25.5px;color:#fff;letter-spacing:-1.15px;-webkit-text-stroke:.45px #fff;">OK</div>
</div></div>
<div class="abs" style="left:794px;top:690px;width:272px;height:130px;border:10px solid #e83e24"></div>
</body>
</html>
